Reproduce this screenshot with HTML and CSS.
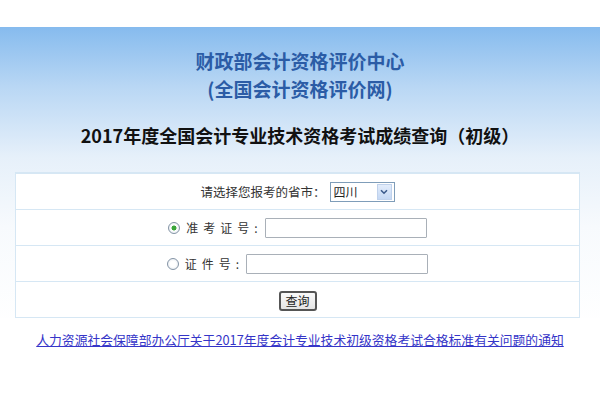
FILE: index.html
```html
<!DOCTYPE html>
<html lang="zh-CN">
<head>
<meta charset="utf-8">
<title>2017年度全国会计专业技术资格考试成绩查询</title>
<link rel="stylesheet" href="styles.css">
</head>
<body>
<div class="topbar"></div>
<div class="banner">
  <div class="org">
    <div class="org-line">财政部会计资格评价中心</div>
    <div class="org-line">(全国会计资格评价网)</div>
  </div>
  <h2 class="subject">2017年度全国会计专业技术资格考试成绩查询（初级）</h2>
  <form class="query">
    <div class="row">
      <span class="label province">请选择您报考的省市：</span>
      <span class="select-wrap">
        <select class="select"><option>四川</option></select>
        <span class="select-arrow"><svg width="8" height="6" viewBox="0 0 8 6"><path d="M1 1.2 L4 4.2 L7 1.2" fill="none" stroke="#3a5a8c" stroke-width="1.6"/></svg></span>
      </span>
    </div>
    <div class="row">
      <input class="radio" type="radio" name="t" checked>
      <span class="label spaced">准考证号:</span>
      <input class="text text-a" type="text">
    </div>
    <div class="row">
      <input class="radio" type="radio" name="t">
      <span class="label spaced">证件号:</span>
      <input class="text text-b" type="text">
    </div>
    <div class="row">
      <button class="btn" type="button">查询</button>
    </div>
  </form>
</div>
<div class="notice">
  <a class="notice-link" href="#">人力资源社会保障部办公厅关于2017年度会计专业技术初级资格考试合格标准有关问题的通知</a>
</div>
</body>
</html>
```
FILE: styles.css
```css
html, body {
  margin: 0;
  padding: 0;
  background: #ffffff;
  font-family: "Noto Sans CJK SC", "Liberation Sans", sans-serif;
}

.topbar {
  height: 27px;
  background: #ffffff;
}

.banner {
  background: linear-gradient(to bottom, #86bbee 0px, #b9d7f4 60px, #e6f0fa 130px, #f7fafd 200px, #ffffff 300px);
  padding-top: 20px;
}

.org {
  text-align: center;
  color: #2b5ca6;
  font-weight: bold;
  font-size: 19px;
  line-height: 28px;
}

.subject {
  margin: 20px 0 0 0;
  text-align: center;
  font-size: 18px;
  line-height: 24px;
  font-weight: bold;
  color: #111111;
}

.query {
  margin: 25px 20px 0 15px;
  background: #ffffff;
  border: 1px solid #d6e7f4;
  border-top-width: 2px;
}

.row {
  height: 35px;
  display: flex;
  align-items: center;
  justify-content: center;
  border-top: 1px solid #d6e7f4;
  font-size: 12px;
  color: #333333;
}

.row:first-child {
  border-top: none;
}

.label {
  line-height: 16px;
}

.province {
  font-size: 12.5px;
}

.spaced {
  letter-spacing: 5px;
  margin-right: 2px;
}

.select-wrap {
  display: inline-flex;
  align-items: center;
  height: 18px;
  width: 63px;
  border: 1px solid #7f9db9;
  background: #ffffff;
  margin-left: 4px;
}

.select {
  -webkit-appearance: none;
  appearance: none;
  border: none;
  outline: none;
  background: transparent;
  font-family: inherit;
  font-size: 12px;
  color: #222222;
  padding: 0 0 0 3px;
  width: 46px;
  height: 18px;
}

.select-arrow {
  width: 15px;
  height: 16px;
  display: inline-flex;
  align-items: center;
  justify-content: center;
  background: linear-gradient(to bottom, #e3edfb, #c4d8f4);
  border: 1px solid #c0d2ec;
  box-sizing: border-box;
  margin-right: 1px;
}

.radio {
  -webkit-appearance: none;
  appearance: none;
  width: 12px;
  height: 12px;
  border-radius: 50%;
  border: 1px solid #8494a6;
  background: radial-gradient(circle, #ffffff 40%, #dde3ea 100%);
  margin: 0 6px 0 0;
  box-sizing: border-box;
}

.radio:checked {
  background: radial-gradient(circle, #3aa53a 0 2.2px, #ffffff 2.8px, #ffffff 40%, #dde3ea 100%);
}

.text {
  height: 20px;
  box-sizing: border-box;
  border: 1px solid #a9b0b8;
  border-radius: 1px;
  padding: 0 3px;
  background: #ffffff;
}

.text-a {
  width: 162px;
}

.text-b {
  width: 182px;
}

.btn {
  font-family: inherit;
  font-size: 12px;
  color: #222222;
  height: 20px;
  width: 38px;
  padding: 0;
  border: 2px solid #555555;
  border-radius: 3px;
  background: linear-gradient(to bottom, #fafafa, #e4e4e4);
  line-height: 14px;
  margin-top: 2px;
}

.notice {
  text-align: center;
  padding-top: 8px;
}

.notice-link {
  font-size: 12.8px;
  line-height: 18px;
  color: #3535c8;
  text-decoration: underline;
}
```
